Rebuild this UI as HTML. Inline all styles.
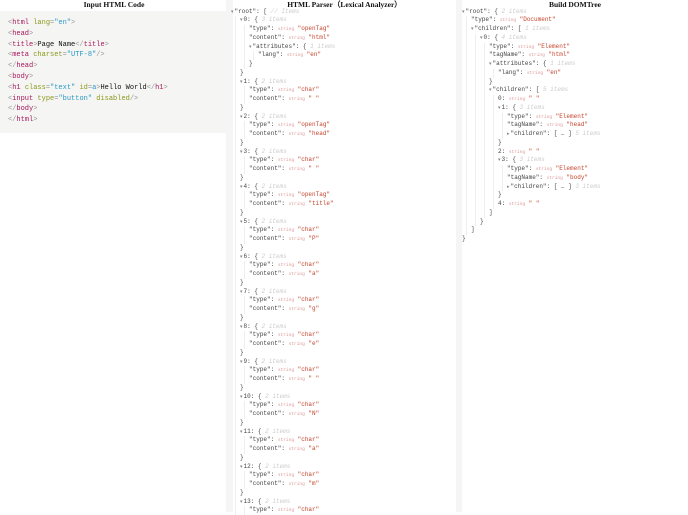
<!DOCTYPE html>
<html><head><meta charset="utf-8"><style>
*{margin:0;padding:0;box-sizing:border-box}
body{width:688px;height:512px;overflow:hidden;background:#fff;position:relative;font-family:"Liberation Mono",monospace}
.t{position:absolute;top:0;height:10px;font:bold 7.5px/10px "Liberation Serif",serif;text-align:center;color:#111}
.g{position:absolute;top:0;height:512px;background:#f5f5f5}
.code{position:absolute;left:0;top:11px;width:228px;height:122px;background:#f5f5f3;padding:7px 8px;font-size:7px;line-height:10.8px;color:#111;white-space:pre}
.tg{color:#a8175b}.at{color:#8a9a1b}.st{color:#2a9ac6}.br{color:#999}
.j{position:absolute;font-size:6px;line-height:8.75px;color:#444;white-space:nowrap}
.j div:not(.n){height:8.75px;line-height:8.75px;overflow:visible}
.j span{line-height:1}
.n{margin-left:4px;border-left:1px solid #eee;padding-left:4px}
.s{font-size:4.5px;color:#d99;}
.v{color:#c4452c}
.c{color:#ccc;font-style:italic}
.a{color:#888;font-size:5px;margin-right:1px}
</style></head><body>
<div class="g" style="left:226px;width:7px"></div>
<div class="g" style="left:456px;width:6px"></div>
<div class="t" style="left:0;width:228px">Input HTML Code</div>
<div class="t" style="left:233px;width:223px">HTML Parser（Lexical Analyzer）</div>
<div class="t" style="left:462px;width:226px">Build DOMTree</div>
<div class="code"><span class="br">&lt;</span><span class="tg">html</span> <span class="at">lang</span><span class="br">=</span><span class="st">"en"</span><span class="br">&gt;</span>
<span class="br">&lt;</span><span class="tg">head</span><span class="br">&gt;</span>
<span class="br">&lt;</span><span class="tg">title</span><span class="br">&gt;</span>Page Name<span class="br">&lt;/</span><span class="tg">title</span><span class="br">&gt;</span>
<span class="br">&lt;</span><span class="tg">meta</span> <span class="at">charset</span><span class="br">=</span><span class="st">"UTF-8"</span><span class="br">/&gt;</span>
<span class="br">&lt;/</span><span class="tg">head</span><span class="br">&gt;</span>
<span class="br">&lt;</span><span class="tg">body</span><span class="br">&gt;</span>
<span class="br">&lt;</span><span class="tg">h1</span> <span class="at">class</span><span class="br">=</span><span class="st">"text"</span> <span class="at">id</span><span class="br">=</span><span class="st">a</span><span class="br">&gt;</span>Hello World<span class="br">&lt;/</span><span class="tg">h1</span><span class="br">&gt;</span>
<span class="br">&lt;</span><span class="tg">input</span> <span class="at">type</span><span class="br">=</span><span class="st">"button"</span> <span class="at">disabled</span><span class="br">/&gt;</span>
<span class="br">&lt;/</span><span class="tg">body</span><span class="br">&gt;</span>
<span class="br">&lt;/</span><span class="tg">html</span><span class="br">&gt;</span></div>

<div class="j" style="left:231px;top:7.6px">
<div><span class="a">▾</span>"root": [ <span class="c">// Items</span></div>
<div class="n">
<div><span class="a">▾</span>0: { <span class="c">3 items</span></div>
<div class="n"><div>"type": <span class="s">string</span> <span class="v">"openTag"</span></div><div>"content": <span class="s">string</span> <span class="v">"html"</span></div>
<div><span class="a">▾</span>"attributes": { <span class="c">1 items</span></div>
<div class="n"><div>"lang": <span class="s">string</span> <span class="v">"en"</span></div></div><div>}</div></div>
<div>}</div>
<div><span class="a">▾</span>1: { <span class="c">2 items</span></div><div class="n"><div>"type": <span class="s">string</span> <span class="v">"char"</span></div><div>"content": <span class="s">string</span> <span class="v">" "</span></div></div><div>}</div>
<div><span class="a">▾</span>2: { <span class="c">2 items</span></div><div class="n"><div>"type": <span class="s">string</span> <span class="v">"openTag"</span></div><div>"content": <span class="s">string</span> <span class="v">"head"</span></div></div><div>}</div>
<div><span class="a">▾</span>3: { <span class="c">2 items</span></div><div class="n"><div>"type": <span class="s">string</span> <span class="v">"char"</span></div><div>"content": <span class="s">string</span> <span class="v">" "</span></div></div><div>}</div>
<div><span class="a">▾</span>4: { <span class="c">2 items</span></div><div class="n"><div>"type": <span class="s">string</span> <span class="v">"openTag"</span></div><div>"content": <span class="s">string</span> <span class="v">"title"</span></div></div><div>}</div>
<div><span class="a">▾</span>5: { <span class="c">2 items</span></div><div class="n"><div>"type": <span class="s">string</span> <span class="v">"char"</span></div><div>"content": <span class="s">string</span> <span class="v">"P"</span></div></div><div>}</div>
<div><span class="a">▾</span>6: { <span class="c">2 items</span></div><div class="n"><div>"type": <span class="s">string</span> <span class="v">"char"</span></div><div>"content": <span class="s">string</span> <span class="v">"a"</span></div></div><div>}</div>
<div><span class="a">▾</span>7: { <span class="c">2 items</span></div><div class="n"><div>"type": <span class="s">string</span> <span class="v">"char"</span></div><div>"content": <span class="s">string</span> <span class="v">"g"</span></div></div><div>}</div>
<div><span class="a">▾</span>8: { <span class="c">2 items</span></div><div class="n"><div>"type": <span class="s">string</span> <span class="v">"char"</span></div><div>"content": <span class="s">string</span> <span class="v">"e"</span></div></div><div>}</div>
<div><span class="a">▾</span>9: { <span class="c">2 items</span></div><div class="n"><div>"type": <span class="s">string</span> <span class="v">"char"</span></div><div>"content": <span class="s">string</span> <span class="v">" "</span></div></div><div>}</div>
<div><span class="a">▾</span>10: { <span class="c">2 items</span></div><div class="n"><div>"type": <span class="s">string</span> <span class="v">"char"</span></div><div>"content": <span class="s">string</span> <span class="v">"N"</span></div></div><div>}</div>
<div><span class="a">▾</span>11: { <span class="c">2 items</span></div><div class="n"><div>"type": <span class="s">string</span> <span class="v">"char"</span></div><div>"content": <span class="s">string</span> <span class="v">"a"</span></div></div><div>}</div>
<div><span class="a">▾</span>12: { <span class="c">2 items</span></div><div class="n"><div>"type": <span class="s">string</span> <span class="v">"char"</span></div><div>"content": <span class="s">string</span> <span class="v">"m"</span></div></div><div>}</div>
<div><span class="a">▾</span>13: { <span class="c">2 items</span></div><div class="n"><div>"type": <span class="s">string</span> <span class="v">"char"</span></div></div>
</div></div>

<div class="j" style="left:462px;top:7.6px">
<div><span class="a">▾</span>"root": { <span class="c">2 items</span></div>
<div class="n"><div>"type": <span class="s">string</span> <span class="v">"Document"</span></div>
<div><span class="a">▾</span>"children": [ <span class="c">1 items</span></div>
<div class="n"><div><span class="a">▾</span>0: { <span class="c">4 items</span></div>
<div class="n"><div>"type": <span class="s">string</span> <span class="v">"Element"</span></div><div>"tagName": <span class="s">string</span> <span class="v">"html"</span></div>
<div><span class="a">▾</span>"attributes": { <span class="c">1 items</span></div><div class="n"><div>"lang": <span class="s">string</span> <span class="v">"en"</span></div></div><div>}</div>
<div><span class="a">▾</span>"children": [ <span class="c">5 items</span></div>
<div class="n"><div>0: <span class="s">string</span> <span class="v">" "</span></div>
<div><span class="a">▾</span>1: { <span class="c">3 items</span></div><div class="n"><div>"type": <span class="s">string</span> <span class="v">"Element"</span></div><div>"tagName": <span class="s">string</span> <span class="v">"head"</span></div><div><span class="a">▸</span>"children": [ … ] <span class="c">5 items</span></div></div><div>}</div>
<div>2: <span class="s">string</span> <span class="v">" "</span></div>
<div><span class="a">▾</span>3: { <span class="c">3 items</span></div><div class="n"><div>"type": <span class="s">string</span> <span class="v">"Element"</span></div><div>"tagName": <span class="s">string</span> <span class="v">"body"</span></div><div><span class="a">▸</span>"children": [ … ] <span class="c">3 items</span></div></div><div>}</div>
<div>4: <span class="s">string</span> <span class="v">" "</span></div></div>
<div>]</div></div>
<div>}</div></div>
<div>]</div></div>
<div>}</div>
</div>
</body></html>
